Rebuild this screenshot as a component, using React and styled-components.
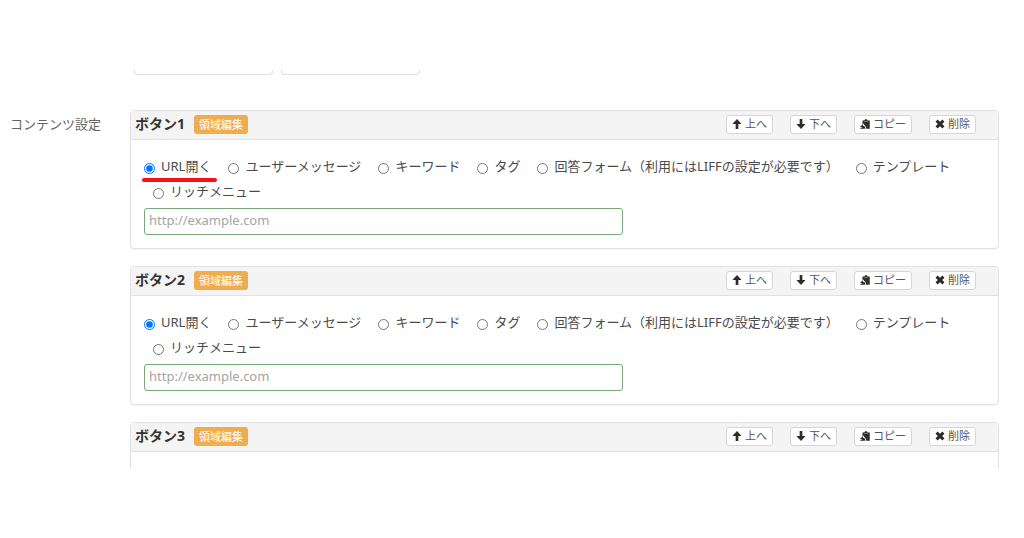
import { useState } from "react"
import styled, { createGlobalStyle } from "styled-components"

const GlobalStyle = createGlobalStyle`
  * {
    box-sizing: border-box;
  }
  body {
    margin: 0;
    background: #fff;
    color: #4a4a4a;
    font-family: "Noto Sans", "Noto Sans CJK JP", sans-serif;
    font-size: 13px;
  }
`;

const Viewport = styled.main`
  height: 398px;
  margin: 70px 0;
  overflow: hidden;
`;

const TopFields = styled.div`
  display: flex;
  gap: 8px;
  margin-left: 134px;
`;

const FieldEnd = styled.div`
  width: 139px;
  height: 5px;
  border: 1px solid #ddd;
  border-top: 0;
  border-radius: 0 0 4px 4px;
`;

const FormRow = styled.section`
  display: grid;
  grid-template-columns: 120px 1fr;
  margin: 35px 25px 0 10px;
`;

const RowTitle = styled.div`
  line-height: 28px;
  color: #666;
  font-size: 13px;
`;

const Panels = styled.div`
  display: flex;
  flex-direction: column;
  gap: 17px;
`;

const Panel = styled.article`
  border: 1px solid #e2e2e2;
  border-radius: 4px;
  overflow: hidden;
  box-shadow: 0 1px 1px rgba(0, 0, 0, 0.05);
`;

const PanelHeader = styled.header`
  display: flex;
  align-items: center;
  gap: 9px;
  height: 29px;
  padding: 0 22px 1px 4px;
  background: #f4f4f4;
  border-bottom: 1px solid #e2e2e2;
`;

const PanelTitle = styled.h2`
  margin: 0;
  padding-bottom: 2px;
  font-size: 14px;
  line-height: 20px;
  color: #333;
`;

const EditButton = styled.button`
  height: 19px;
  padding: 0 5px;
  border: 0;
  border-radius: 3px;
  background: #f0ad4e;
  color: #fff;
  font-family: inherit;
  font-size: 11px;
  line-height: 18px;
`;

const Actions = styled.div`
  display: flex;
  gap: 17px;
  margin-left: auto;
`;

const ActionButton = styled.button`
  display: flex;
  align-items: center;
  gap: 3px;
  height: 19px;
  padding: 0 5px 1px;
  border: 1px solid #d6d6d6;
  border-radius: 3px;
  background: #fff;
  color: #555;
  font-family: inherit;
  font-size: 11px;
  line-height: 16px;
  white-space: nowrap;
`;

const PanelBody = styled.div`
  min-height: 108px;
  padding: 14px 13px 13px;
`;

const Choices = styled.div`
  display: flex;
  flex-wrap: wrap;
  column-gap: 8px;
  margin-bottom: 4px;
`;

const Choice = styled.label`
  position: relative;
  display: flex;
  align-items: center;
  gap: 6px;
  line-height: 25px;
  white-space: nowrap;

  & + & {
    margin-left: 9px;
  }
`;

const Radio = styled.input`
  width: 11px;
  height: 11px;
  margin: 4px 0 0;
`;

const Underline = styled.span`
  position: absolute;
  left: -2px;
  right: -6px;
  bottom: -3px;
  height: 4px;
  border-radius: 2px;
  background: #fb0d1b;
`;

const UrlInput = styled.input`
  display: block;
  width: 57%;
  height: 27px;
  padding: 0 4px 3px;
  border: 1px solid #79a97b;
  border-radius: 3px;
  color: #555;
  font-family: inherit;
  font-size: 13px;

  &::placeholder {
    color: #a5a5a5;
  }
`;

const Glyph = styled.svg`
  width: 10px;
  height: 10px;
  fill: #2d2d2d;
`;

const UpIcon = () => (
  <Glyph viewBox="0 0 12 12" aria-hidden="true">
    <path d="M6 0 11.5 6H7.6v6H4.4V6H.5z" />
  </Glyph>
)

const DownIcon = () => (
  <Glyph viewBox="0 0 12 12" aria-hidden="true">
    <path d="M6 12 .5 6h3.9V0h3.2v6h3.9z" />
  </Glyph>
)

const PasteIcon = () => (
  <Glyph viewBox="0 0 12 12" aria-hidden="true">
    <path d="M3 1.7h2.2L6 .3h2.2L9 1.7h2.7v10H7.4c0-2.6-1.2-4.1-2.8-4.8V5.3L3 6.6z" />
    <path d="M0 9.2 3.6 6.4v1.7c1.6 0 2.7.8 2.8 3.6H.3v-1h3z" />
    <path d="M5 3h4.4" stroke="#999" strokeWidth=".8" />
  </Glyph>
)

const RemoveIcon = () => (
  <Glyph viewBox="0 0 12 12" aria-hidden="true">
    <path d="M3.2.6 6 3.4 8.8.6l2.6 2.6L8.6 6l2.8 2.8-2.6 2.6L6 8.6l-2.8 2.8L.6 8.8 3.4 6 .6 3.2z" />
  </Glyph>
)

const actions = [
  { label: "上へ", Icon: UpIcon },
  { label: "下へ", Icon: DownIcon },
  { label: "コピー", Icon: PasteIcon },
  { label: "削除", Icon: RemoveIcon },
]

const choices = [
  "URL開く",
  "ユーザーメッセージ",
  "キーワード",
  "タグ",
  "回答フォーム（利用にはLIFFの設定が必要です）",
  "テンプレート",
  "リッチメニュー",
]

const ActionForm = ({ number, marked }) => {
  const [selected, setSelected] = useState(choices[0])

  return (
    <>
      <Choices>
        {choices.map((choice, i) => (
          <Choice key={choice}>
            <Radio
              type="radio"
              name={`action-${number}`}
              checked={selected === choice}
              onChange={() => setSelected(choice)}
            />
            {choice}
            {marked && i === 0 && <Underline />}
          </Choice>
        ))}
      </Choices>
      <UrlInput type="url" aria-label="URL" placeholder="http://example.com" />
    </>
  )
}

const ButtonPanel = ({ number, children }) => (
  <Panel>
    <PanelHeader>
      <PanelTitle>ボタン{number}</PanelTitle>
      <EditButton type="button">領域編集</EditButton>
      <Actions>
        {actions.map(({ label, Icon }) => (
          <ActionButton type="button" key={label}>
            <Icon />
            {label}
          </ActionButton>
        ))}
      </Actions>
    </PanelHeader>
    <PanelBody>{children}</PanelBody>
  </Panel>
)

const App = () => {
  return (
    <>
      <GlobalStyle />
      <Viewport>
        <TopFields>
          <FieldEnd />
          <FieldEnd />
        </TopFields>
        <FormRow>
          <RowTitle>コンテンツ設定</RowTitle>
          <Panels>
            <ButtonPanel number={1}>
              <ActionForm number={1} marked />
            </ButtonPanel>
            <ButtonPanel number={2}>
              <ActionForm number={2} />
            </ButtonPanel>
            <ButtonPanel number={3} />
          </Panels>
        </FormRow>
      </Viewport>
    </>
  )
}

export default App
